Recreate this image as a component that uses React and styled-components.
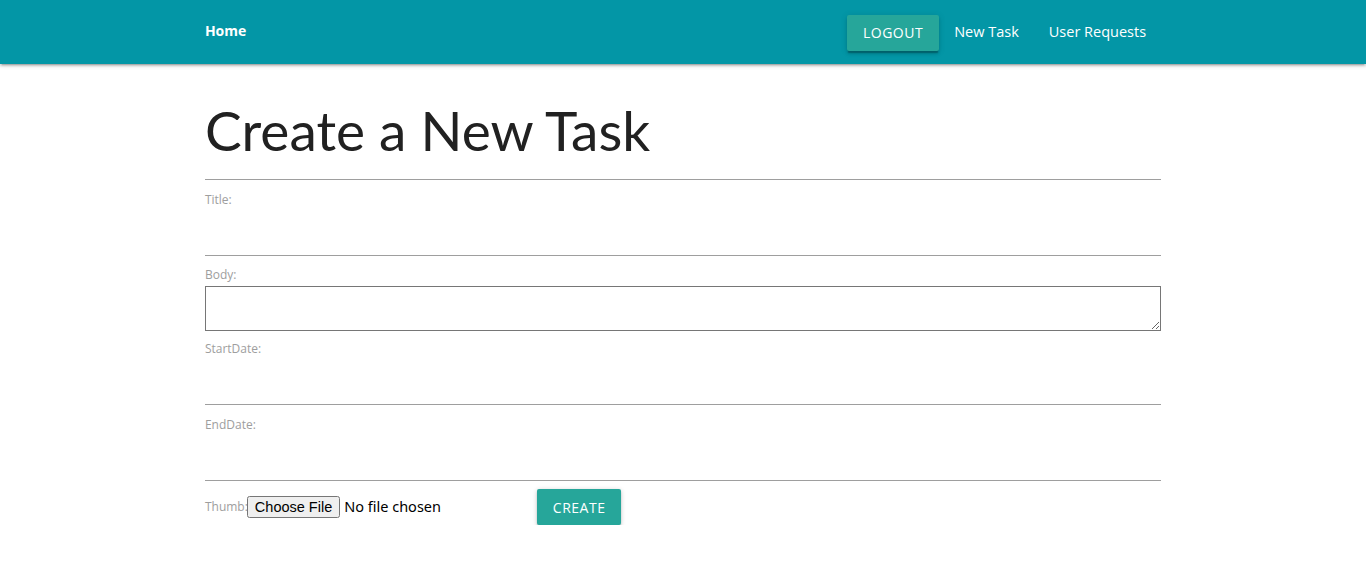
import React from 'react';
import styled, { createGlobalStyle } from 'styled-components';

const GlobalStyle = createGlobalStyle`
  html, body {
    margin: 0;
    padding: 0;
    background: #fff;
    font-family: "Open Sans", "Noto Sans", sans-serif;
    color: rgba(0, 0, 0, 0.87);
  }
  * { box-sizing: border-box; }
`;

const Nav = styled.nav`
  height: 64px;
  background: #0396a6;
  box-shadow: 0 2px 2px 0 rgba(0,0,0,0.14), 0 3px 1px -2px rgba(0,0,0,0.12), 0 1px 5px 0 rgba(0,0,0,0.2);
`;

const NavInner = styled.div`
  width: 70%;
  margin: 0 auto;
  height: 100%;
  display: flex;
  align-items: center;
  justify-content: space-between;
`;

const Brand = styled.a`
  display: block;
  color: #fff;
  font-weight: 700;
  font-size: 14px;
  text-decoration: none;
  padding-bottom: 3px;
`;

const NavLinks = styled.ul`
  list-style: none;
  margin: 0;
  padding: 0;
  display: flex;
  align-items: center;
  height: 100%;
`;

const NavLink = styled.a`
  color: #fff;
  font-size: 14.5px;
  padding: 0 15px;
  text-decoration: none;
  line-height: 64px;
`;

const Button = styled.button`
  height: 36px;
  padding: 0 16px;
  border: none;
  border-radius: 2px;
  background: #26a69a;
  color: #fff;
  font-family: inherit;
  font-size: 14px;
  letter-spacing: 0.5px;
  text-transform: uppercase;
  cursor: pointer;
  box-shadow: ${p => p.$raised
    ? '0 3px 3px 0 rgba(0,0,0,0.14), 0 1px 7px 0 rgba(0,0,0,0.12), 0 3px 1px -1px rgba(0,0,0,0.2)'
    : '0 2px 2px 0 rgba(0,0,0,0.14), 0 3px 1px -2px rgba(0,0,0,0.12), 0 1px 5px 0 rgba(0,0,0,0.2)'};
  margin-left: ${p => p.$offset || 0}px;
  margin-top: ${p => p.$lift || 0}px;
`;

const Main = styled.main`
  width: 70%;
  margin: 0 auto;
`;

const Heading = styled.h1`
  font-family: Lato, "Open Sans", sans-serif;
  font-size: 55px;
  font-weight: 400;
  color: #212121;
  line-height: 66px;
  margin: 33px 0 16px;
`;

const Divider = styled.hr`
  border: none;
  border-top: 1px solid #9e9e9e;
  margin: 0 0 11px;
`;

const Label = styled.label`
  display: block;
  font-size: 12px;
  line-height: 18px;
  color: #9e9e9e;
`;

const Input = styled.input`
  display: block;
  width: 100%;
  height: 47px;
  border: none;
  border-bottom: 1px solid #9e9e9e;
  outline: none;
  font-size: 16px;
  margin: 0 0 ${p => p.$gap || 10}px;
  background: transparent;
`;

const TextArea = styled.textarea`
  display: block;
  width: 100%;
  height: 45px;
  border: 1px solid #767676;
  margin: 2px 0 9px;
  resize: vertical;
  font-family: inherit;
`;

const ThumbRow = styled.div`
  display: flex;
  align-items: center;
  height: 36px;
`;

const InlineLabel = styled(Label)`
  display: inline;
`;

const FileInput = styled.input`
  font-family: "Noto Sans", sans-serif;
  font-size: 14.5px;
  width: 250px;
  color: #000;
  margin-left: -1px;
`;

export default function App() {
  return (
    <>
      <GlobalStyle />
      <Nav>
        <NavInner>
          <Brand href="#">Home</Brand>
          <NavLinks>
            <li><Button $raised $lift={1}>Logout</Button></li>
            <li><NavLink href="#">New Task</NavLink></li>
            <li><NavLink href="#">User Requests</NavLink></li>
          </NavLinks>
        </NavInner>
      </Nav>
      <Main>
        <Heading>Create a New Task</Heading>
        <Divider />
        <form onSubmit={e => e.preventDefault()}>
          <Label>Title:</Label>
          <Input type="text" />
          <Label>Body:</Label>
          <TextArea />
          <Label>StartDate:</Label>
          <Input type="text" $gap={11} />
          <Label>EndDate:</Label>
          <Input type="text" $gap={8} />
          <ThumbRow>
            <InlineLabel>Thumb:</InlineLabel>
            <FileInput type="file" />
            <Button type="submit" $offset={40}>Create</Button>
          </ThumbRow>
        </form>
      </Main>
    </>
  );
}
